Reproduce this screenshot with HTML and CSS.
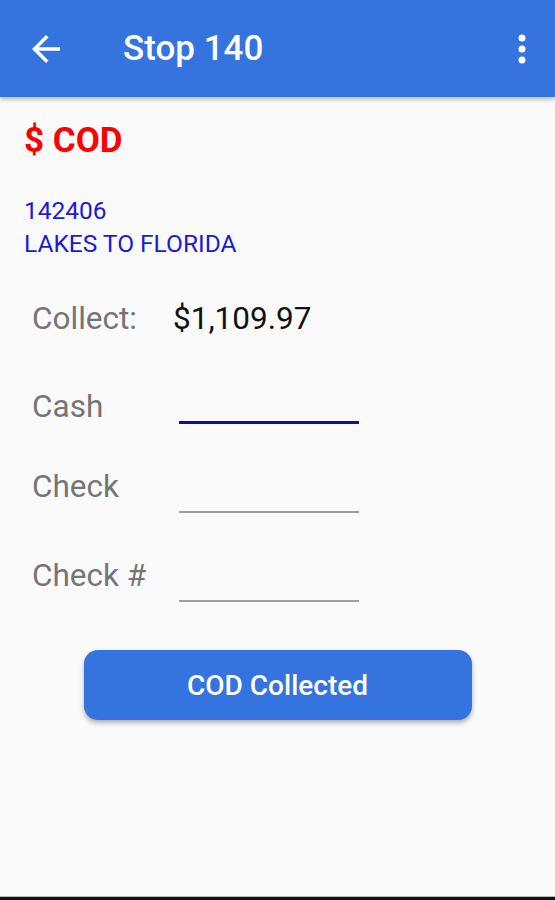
FILE: index.html
```html
<!DOCTYPE html>
<html lang="en">
<head>
 <meta charset="UTF-8">
 <meta name="viewport" content="width=device-width, initial-scale=1.0">
 <title>Stop 140</title>
 <link rel="stylesheet" href="styles.css">
</head>
<body>
 <header class="toolbar">
 <button class="icon-btn back">
 <svg width="42" height="42" viewBox="0 0 24 24"><path d="M20 11H7.83l5.59-5.59L12 4l-8 8 8 8 1.41-1.41L7.83 13H20v-2z" fill="#fff"/></svg>
 </button>
 <h1 class="title">Stop 140</h1>
 <button class="icon-btn menu">
 <svg width="8" height="30" viewBox="0 0 8 30"><circle cx="4" cy="4" r="3.5" fill="#fff"/><circle cx="4" cy="15" r="3.5" fill="#fff"/><circle cx="4" cy="26" r="3.5" fill="#fff"/></svg>
 </button>
 </header>
 <main class="content">
 <h2 class="cod">$ COD</h2>
 <div class="customer">
 <div>142406</div>
 <div>LAKES TO FLORIDA</div>
 </div>
 <div class="collect">
 <span class="label">Collect:</span>
 <span class="amount">$1,109.97</span>
 </div>
 <div class="field current">
 <label class="label" for="cash">Cash</label>
 <input type="text" id="cash" class="input">
 </div>
 <div class="field">
 <label class="label" for="check">Check</label>
 <input type="text" id="check" class="input">
 </div>
 <div class="field">
 <label class="label" for="checkno">Check #</label>
 <input type="text" id="checkno" class="input">
 </div>
 <div class="actions">
 <button class="primary">COD Collected</button>
 </div>
 </main>
 <div class="bottom-edge"></div>
</body>
</html>
```
FILE: styles.css
```css
html, body {
margin: 0;
padding: 0;
height: 100%;
}
body {
background-color: #fafafa;
font-family: Roboto, 'Noto Sans', sans-serif;
display: flex;
flex-direction: column;
}
.toolbar {
height: 97px;
background-color: #3574de;
display: flex;
align-items: center;
box-shadow: 0 2px 5px rgba(0, 0, 0, 0.3);
position: relative;
z-index: 1;
flex-shrink: 0;
}
.icon-btn {
background: none;
border: none;
padding: 0;
display: flex;
align-items: center;
justify-content: center;
cursor: pointer;
}
.back {
margin-left: 25px;
width: 42px;
height: 42px;
}
.back svg {
display: block;
}
.title {
margin: 0 0 0 56px;
color: #fff;
font-size: 35px;
font-weight: 500;
flex: 1;
}
.menu {
margin-right: 29px;
}
.content {
flex: 1;
padding: 0 24px;
}
.cod {
margin: 24px 0 0;
color: #ff0000;
font-size: 35px;
font-weight: 700;
line-height: 40px;
}
.customer {
margin-top: 33px;
color: #1a1ad9;
font-size: 24.5px;
line-height: 33px;
}
.collect {
margin-top: 39px;
padding-left: 8px;
display: flex;
align-items: center;
font-size: 31.5px;
line-height: 40px;
}
.label {
color: #757575;
font-size: 31.5px;
width: 141px;
}
.amount {
color: #111;
}
.field {
padding-left: 8px;
display: flex;
align-items: flex-end;
height: 89px;
}
.field .label {
width: 147px;
line-height: 40px;
margin-bottom: 6px;
}
.input {
width: 180px;
height: 40px;
border: none;
border-bottom: 2px solid #9e9e9e;
background: transparent;
font-size: 26px;
padding: 0;
outline: none;
}
.field.current {
height: 85px;
}
.field.current .label {
margin-bottom: -3px;
}
.field.current .input {
border-bottom: 3px solid #1010a0;
}
.actions {
display: flex;
justify-content: center;
margin-top: 48px;
}
.primary {
width: 388px;
height: 70px;
background-color: #3574de;
color: #fff;
border: none;
border-radius: 14px;
font-family: Roboto, sans-serif;
font-size: 28px;
font-weight: 500;
box-shadow: 0 3px 5px rgba(0, 0, 0, 0.3);
cursor: pointer;
}
.bottom-edge {
height: 3px;
background-color: #111;
border-top: 1px solid #bbb;
flex-shrink: 0;
}
```
